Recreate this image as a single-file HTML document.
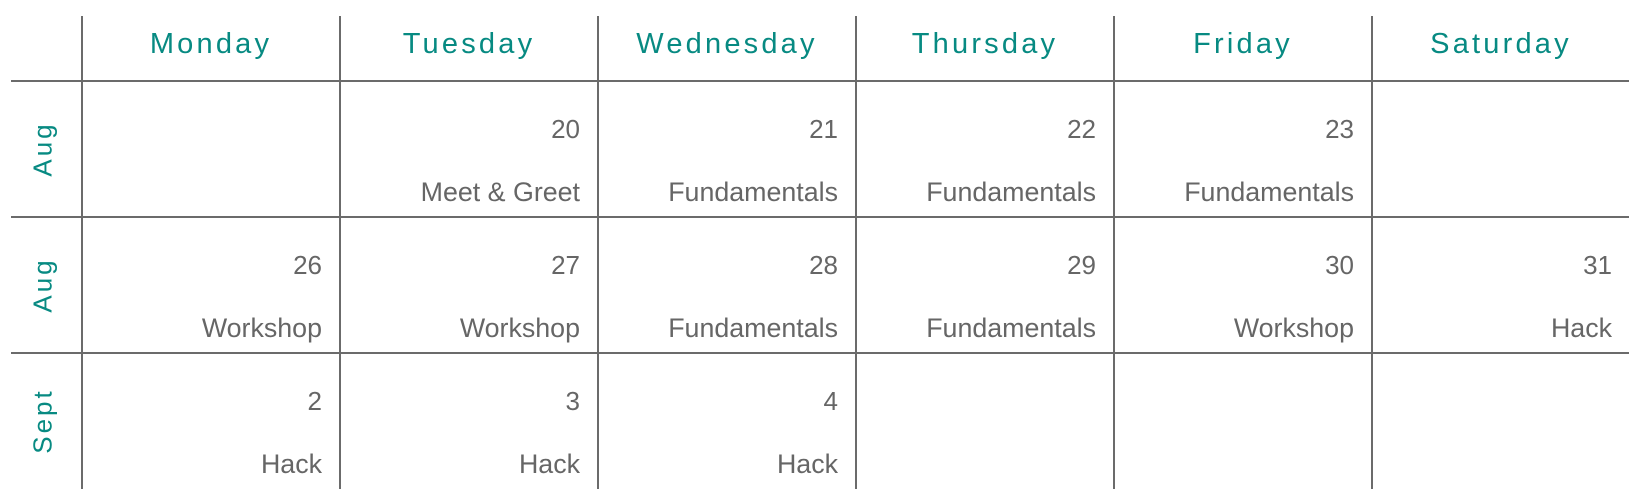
<!DOCTYPE html>
<html><head><meta charset="utf-8"><style>
html,body{margin:0;padding:0;background:#fff;}
body{width:1646px;height:501px;position:relative;overflow:hidden;font-family:"Liberation Sans",Arial,sans-serif;}
.v{position:absolute;width:2px;background:#6b6b6b;top:16px;height:473px;}
.h{position:absolute;height:2px;background:#6b6b6b;left:11px;width:1618px;}
.hd{position:absolute;top:24px;width:258px;text-align:center;color:#078a82;font-size:29px;letter-spacing:3.2px;line-height:40px;}
.t{position:absolute;width:240px;text-align:right;color:#666;line-height:30px;}
.n{font-size:26px;}
.e{font-size:26.8px;}
.m{position:absolute;left:43px;color:#078a82;font-size:26px;letter-spacing:3px;transform:translate(-50%,-50%) rotate(-90deg);white-space:nowrap;}
</style></head><body>
<div class="v" style="left:81px"></div>
<div class="v" style="left:339px"></div>
<div class="v" style="left:597px"></div>
<div class="v" style="left:855px"></div>
<div class="v" style="left:1113px"></div>
<div class="v" style="left:1371px"></div>
<div class="h" style="top:80px"></div>
<div class="h" style="top:216px"></div>
<div class="h" style="top:352px"></div>

<div class="hd" style="left:82px">Monday</div>
<div class="hd" style="left:340px">Tuesday</div>
<div class="hd" style="left:598px">Wednesday</div>
<div class="hd" style="left:856px">Thursday</div>
<div class="hd" style="left:1114px">Friday</div>
<div class="hd" style="left:1372px">Saturday</div>

<div class="m" style="top:149px">Aug</div>
<div class="m" style="top:285px">Aug</div>
<div class="m" style="top:421px">Sept</div>

<!-- row1 -->
<div class="t n" style="left:340px;top:114px">20</div>
<div class="t e" style="left:340px;top:177px">Meet &amp; Greet</div>
<div class="t n" style="left:598px;top:114px">21</div>
<div class="t e" style="left:598px;top:177px">Fundamentals</div>
<div class="t n" style="left:856px;top:114px">22</div>
<div class="t e" style="left:856px;top:177px">Fundamentals</div>
<div class="t n" style="left:1114px;top:114px">23</div>
<div class="t e" style="left:1114px;top:177px">Fundamentals</div>
<!-- row2 -->
<div class="t n" style="left:82px;top:250px">26</div>
<div class="t e" style="left:82px;top:313px">Workshop</div>
<div class="t n" style="left:340px;top:250px">27</div>
<div class="t e" style="left:340px;top:313px">Workshop</div>
<div class="t n" style="left:598px;top:250px">28</div>
<div class="t e" style="left:598px;top:313px">Fundamentals</div>
<div class="t n" style="left:856px;top:250px">29</div>
<div class="t e" style="left:856px;top:313px">Fundamentals</div>
<div class="t n" style="left:1114px;top:250px">30</div>
<div class="t e" style="left:1114px;top:313px">Workshop</div>
<div class="t n" style="left:1372px;top:250px">31</div>
<div class="t e" style="left:1372px;top:313px">Hack</div>
<!-- row3 -->
<div class="t n" style="left:82px;top:386px">2</div>
<div class="t e" style="left:82px;top:449px">Hack</div>
<div class="t n" style="left:340px;top:386px">3</div>
<div class="t e" style="left:340px;top:449px">Hack</div>
<div class="t n" style="left:598px;top:386px">4</div>
<div class="t e" style="left:598px;top:449px">Hack</div>
</body></html>
